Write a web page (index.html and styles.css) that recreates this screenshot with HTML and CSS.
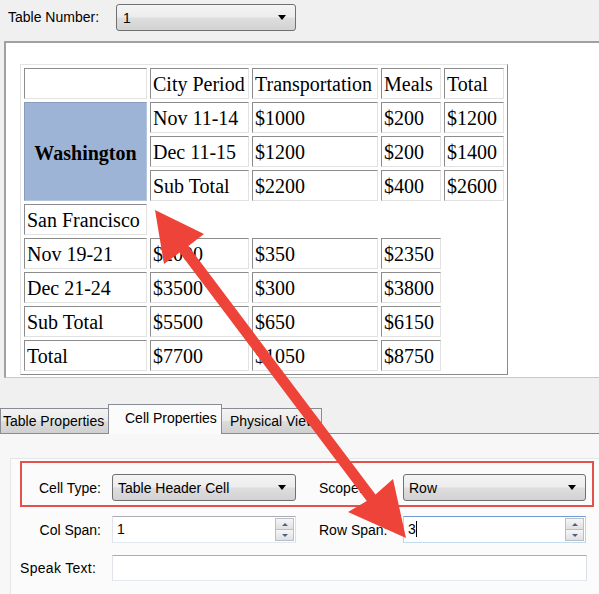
FILE: index.html
```html
<!DOCTYPE html>
<html>
<head>
  <title>Table Properties</title>
  <link rel="stylesheet" href="styles.css">
</head>
<body>
  <div class="toolbar">
    <label class="toolbar-label">Table Number:</label>
    <div class="combo table-combo"><span class="combo-text">1</span><i class="caret"></i></div>
  </div>

  <div class="preview">
    <table class="data-table">
      <tr>
        <td class="c1"></td>
        <td class="c2">City Period</td>
        <td class="c3">Transportation</td>
        <td class="c4">Meals</td>
        <td class="c5">Total</td>
      </tr>
      <tr>
        <th rowspan="3" class="city">Washington</th>
        <td>Nov 11-14</td>
        <td>$1000</td>
        <td>$200</td>
        <td>$1200</td>
      </tr>
      <tr>
        <td>Dec 11-15</td>
        <td>$1200</td>
        <td>$200</td>
        <td>$1400</td>
      </tr>
      <tr>
        <td>Sub Total</td>
        <td>$2200</td>
        <td>$400</td>
        <td>$2600</td>
      </tr>
      <tr>
        <td>San Francisco</td>
      </tr>
      <tr>
        <td>Nov 19-21</td>
        <td>$2000</td>
        <td>$350</td>
        <td>$2350</td>
      </tr>
      <tr>
        <td>Dec 21-24</td>
        <td>$3500</td>
        <td>$300</td>
        <td>$3800</td>
      </tr>
      <tr>
        <td>Sub Total</td>
        <td>$5500</td>
        <td>$650</td>
        <td>$6150</td>
      </tr>
      <tr>
        <td>Total</td>
        <td>$7700</td>
        <td>$1050</td>
        <td>$8750</td>
      </tr>
    </table>
  </div>

  <div class="tabbar">
    <div class="tab tab-table">Table Properties</div>
    <div class="tab tab-cell active">Cell Properties</div>
    <div class="tab tab-physical">Physical View</div>
  </div>

  <div class="tabpage">
    <div class="group">
      <div class="form-row highlight">
        <label class="field-label">Cell Type:</label>
        <div class="combo wide-combo"><span class="combo-text">Table Header Cell</span><i class="caret"></i></div>
        <label class="field-label second">Scope:</label>
        <div class="combo narrow-combo"><span class="combo-text">Row</span><i class="caret"></i></div>
      </div>

      <div class="form-row spans">
        <label class="field-label">Col Span:</label>
        <div class="spin wide-combo">
          <span class="spin-text">1</span>
          <div class="spin-btns">
            <span class="spin-btn"><i class="up"></i></span>
            <span class="spin-btn"><i class="down"></i></span>
          </div>
        </div>
        <label class="field-label second">Row Span:</label>
        <div class="spin narrow-combo focused">
          <span class="spin-text">3<span class="cursor"></span></span>
          <div class="spin-btns">
            <span class="spin-btn"><i class="up"></i></span>
            <span class="spin-btn"><i class="down"></i></span>
          </div>
        </div>
      </div>

      <div class="form-row speak">
        <label class="field-label">Speak Text:</label>
        <div class="text-input"></div>
      </div>
    </div>
  </div>

  <!-- annotation arrow drawn over the dialog -->
  <svg class="annotation" width="599" height="594" viewBox="0 0 599 594">
    <polygon fill="#ee4338" points="155,210 204,234 188.4,246 375.5,494.5 393,479 406,538 348,512 366.8,501 179.6,252.6 164,264"/>
  </svg>
</body>
</html>
```

FILE: styles.css
```css
html, body {
  margin: 0;
  overflow: hidden;
}

body {
  position: relative;
  width: 599px;
  height: 594px;
  background-color: #f0f0f0;
  font-family: "Liberation Sans", Arial, sans-serif;
  font-size: 14px;
  color: #000;
}

/* top bar */
.toolbar {
  height: 41px;
  box-sizing: border-box;
  display: flex;
  align-items: flex-start;
  padding: 4px 0 0 8px;
}

.toolbar-label {
  width: 95px;
  line-height: 27px;
  margin-right: 13px;
  white-space: nowrap;
}

.combo {
  display: flex;
  align-items: center;
  height: 27px;
  box-sizing: border-box;
  border: 1px solid #707070;
  border-radius: 3px;
  background: linear-gradient(#f4f4f4, #ececec 48%, #dedede 52%, #d2d2d2);
  padding: 0 9px 0 5px;
}

.table-combo {
  width: 180px;
  padding-left: 6px;
}

.combo-text {
  flex: 1;
  white-space: nowrap;
}

.caret {
  width: 0;
  height: 0;
  border-left: 4px solid transparent;
  border-right: 4px solid transparent;
  border-top: 5px solid #000;
}

/* html preview */
.preview {
  margin-left: 4px;
  height: 337px;
  box-sizing: border-box;
  background-color: #fff;
  border-top: 2px solid #a0a0a0;
  border-left: 2px solid #a0a0a0;
  border-bottom: 1px solid #c8c8c8;
  padding: 21px 0 0 14px;
}

.data-table {
  table-layout: fixed;
  width: 488px;
  border-collapse: separate;
  border-spacing: 3px;
  border: 1px solid;
  border-color: #e4e4e4 #8a8a8a #8a8a8a #e4e4e4;
}

.data-table td,
.data-table th {
  box-sizing: border-box;
  height: 31px;
  padding: 1px 2px 0;
  border: 1px solid;
  border-color: #8c8c8c #e2e2e2 #e2e2e2 #8c8c8c;
  font-family: "Liberation Serif", "Times New Roman", serif;
  font-size: 20px;
  font-weight: normal;
  text-align: left;
  white-space: nowrap;
  overflow: hidden;
}

.data-table .c1 { width: 123px; }
.data-table .c2 { width: 99px; }
.data-table .c3 { width: 126px; }
.data-table .c4 { width: 60px; }
.data-table .c5 { width: 60px; }

.data-table th.city {
  background-color: #9db4d7;
  border-color: #8a9cbb #b4c5e0 #b4c5e0 #8a9cbb;
  padding-top: 3px;
  font-weight: bold;
  text-align: center;
}

/* tabs */
.tabbar {
  height: 55px;
  display: flex;
  align-items: flex-end;
}

.tab {
  box-sizing: border-box;
  height: 25px;
  line-height: 24px;
  border: 1px solid #898c95;
  border-bottom: none;
  background: linear-gradient(#f3f3f3, #ebebeb 48%, #dddddd 52%, #cfcfcf);
  white-space: nowrap;
  overflow: hidden;
}

.tab-table {
  width: 109px;
  padding-left: 2px;
}

.tab-cell {
  width: 114px;
  margin-left: -1px;
  padding-left: 16px;
}

.tab-physical {
  width: 101px;
  margin-left: -1px;
  padding-left: 8px;
}

.tab.active {
  position: relative;
  z-index: 1;
  height: 30px;
  line-height: 27px;
  margin-bottom: -1px;
  background: #fbfbfb;
}

.tabpage {
  height: 161px;
  box-sizing: border-box;
  border-top: 1px solid #898c95;
  background-color: #f7f7f7;
  padding: 24px 0 0 10px;
}

.group {
  height: 100%;
  box-sizing: border-box;
  border-top: 1px solid #e6e6e6;
  border-left: 1px solid #e6e6e6;
  background-color: #fbfbfb;
  padding: 2px 0 0 9px;
}

/* form rows */
.form-row {
  display: flex;
  align-items: center;
  padding-left: 2px;
}

.form-row.highlight {
  width: 574px;
  box-sizing: border-box;
  border: 2px solid #e2514d;
  padding: 11px 0 4px 0;
}

.field-label {
  width: 79px;
  margin-right: 11px;
  text-align: right;
  white-space: nowrap;
}

.field-label.second {
  width: 84px;
  margin: 0 0 0 23px;
  text-align: left;
}

.wide-combo {
  width: 184px;
}

.narrow-combo {
  width: 183px;
}

.spans {
  margin-top: 9px;
}

.spin {
  display: flex;
  align-items: stretch;
  height: 27px;
  box-sizing: border-box;
  border: 1px solid;
  border-color: #abadb3 #dbdfe6 #e3e9ef #e2e3ea;
  background-color: #fff;
  padding: 1px 1px 1px 4px;
}

.spin.focused {
  border-color: #6f9bd0 #b7d3ee #c5dbf0 #b7d3ee;
}

.spin-text {
  flex: 1;
  line-height: 23px;
}

.cursor {
  display: inline-block;
  width: 1px;
  height: 16px;
  background-color: #000;
  vertical-align: -3px;
}

.spin-btns {
  display: flex;
  flex-direction: column;
  width: 19px;
}

.spin-btn {
  flex: 1;
  display: flex;
  align-items: center;
  justify-content: center;
  border: 1px solid #b9bfc8;
  background: linear-gradient(#f6f6f6, #e0e0e0);
}

.spin-btn + .spin-btn {
  border-top: none;
}

.spin-btn .up,
.spin-btn .down {
  width: 0;
  height: 0;
  border-left: 3px solid transparent;
  border-right: 3px solid transparent;
}

.spin-btn .up {
  border-bottom: 3px solid #4d6185;
}

.spin-btn .down {
  border-top: 3px solid #4d6185;
}

.speak {
  margin-top: 12px;
}

.speak .field-label {
  width: 80px;
  margin-left: -2px;
  margin-right: 12px;
  text-align: left;
  letter-spacing: 0.3px;
}

.text-input {
  width: 475px;
  height: 26px;
  box-sizing: border-box;
  border: 1px solid;
  border-color: #abadb3 #dbdfe6 #e3e9ef #e2e3ea;
  background-color: #fff;
}

/* annotation overlay */
.annotation {
  position: absolute;
  left: 0;
  top: 0;
  pointer-events: none;
}
```
